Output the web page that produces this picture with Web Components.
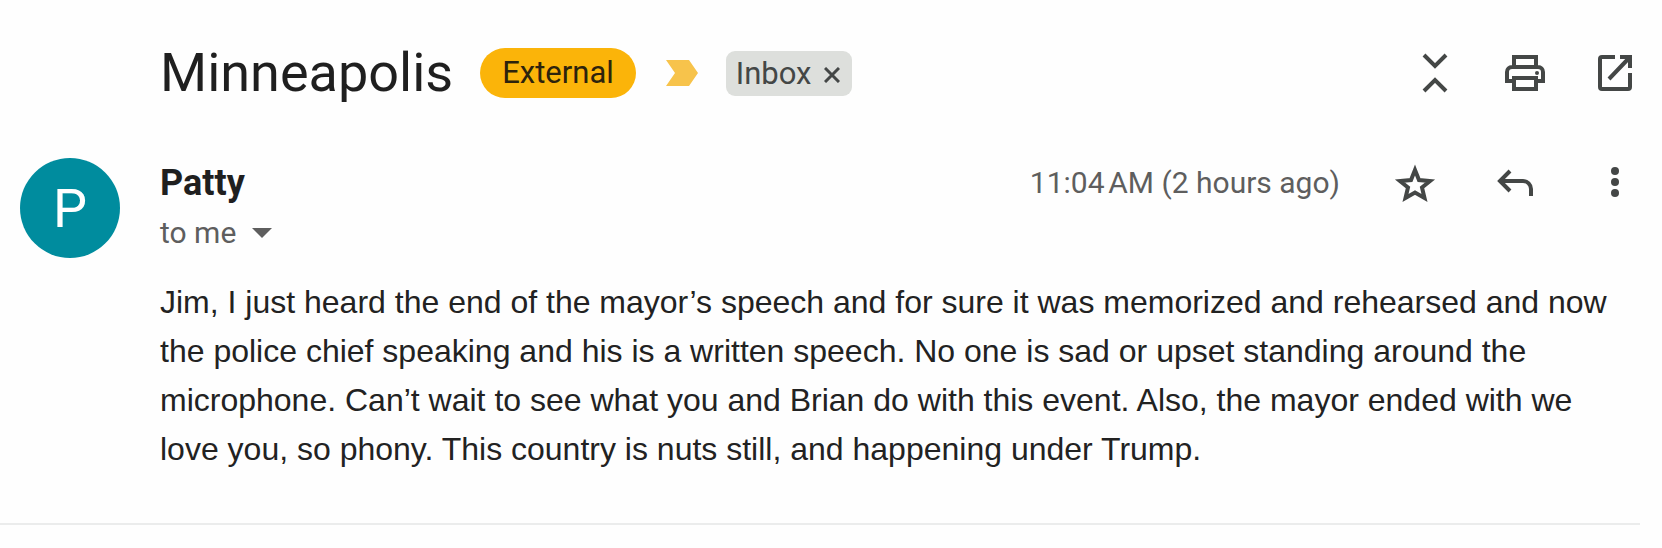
<!DOCTYPE html>
<html lang="en">
<head>
<meta charset="utf-8">
<title>Minneapolis</title>
<style>
body { margin: 0; background: #fefefe; color: #1f1f1f; font-family: Roboto, sans-serif; }
</style>
</head>
<body>
<mail-thread>
  <mail-subject slot="subject">
    Minneapolis
    <mail-badge slot="labels">External</mail-badge>
    <importance-marker slot="labels"></importance-marker>
    <mail-label slot="labels">Inbox</mail-label>
    <icon-button slot="actions" name="collapse" label="Collapse all"></icon-button>
    <icon-button slot="actions" name="print" label="Print all"></icon-button>
    <icon-button slot="actions" name="open" label="In new window"></icon-button>
  </mail-subject>
  <mail-message>
    <mail-avatar slot="avatar">P</mail-avatar>
    <span slot="sender">Patty</span>
    <span slot="recipient">to me</span>
    <span slot="time">11:04&#8239;AM (2 hours ago)</span>
    <icon-button slot="actions" name="star" label="Star"></icon-button>
    <icon-button slot="actions" name="reply" label="Reply"></icon-button>
    <icon-button slot="actions" name="more" label="More"></icon-button>
    Jim, I just heard the end of the mayor’s speech and for sure it was memorized and rehearsed and now the police chief speaking and his is a written speech. No one is sad or upset standing around the microphone. Can’t wait to see what you and Brian do with this event. Also, the mayor ended with we love you, so phony. This country is nuts still, and happening under Trump.
  </mail-message>
</mail-thread>

<script>
const define = (name, html) => customElements.define(name, class extends HTMLElement {
  constructor() {
    super();
    this.attachShadow({ mode: 'open' }).innerHTML = html;
  }
});

const icons = {
  collapse: '<path d="M14 7l11 11L36 7M14 43l11-11 11 11"/>',
  print: '<path d="M14 19V9h22v10M14 33H7V24a5 5 0 0 1 5-5h26a5 5 0 0 1 5 5v9h-7M14 30h22v11H14z"/><circle class="fill" cx="37" cy="25" r="2"/>',
  open: '<path d="M25 9H12a2 2 0 0 0-2 2v28a2 2 0 0 0 2 2h26a2 2 0 0 0 2-2V25M30 9h10v11M40 9L19 31"/>',
  star: '<path stroke-miterlimit="8" d="M25 12L29 22 40 23 32 29.500 34.500 40 25 34.500 15.500 40 18 29.500 10 23 21 22z"/>',
  reply: '<path d="M20 13L10 23l10 10M10 23h23a8 8 0 0 1 8 8v7"/>',
  more: '<g class="fill"><circle cx="25" cy="13" r="4"/><circle cx="25" cy="24" r="4"/><circle cx="25" cy="35" r="4"/></g>'
};

customElements.define('icon-button', class extends HTMLElement {
  connectedCallback() {
    if (this.shadowRoot) return;
    this.attachShadow({ mode: 'open' }).innerHTML = `
      <style>
        :host { display: block; }
        button { display: block; width: 50px; height: 50px; padding: 0; border: 0; background: none; color: #444746; cursor: pointer; }
        svg { display: block; fill: none; stroke: currentColor; stroke-width: 4; }
        .fill { fill: currentColor; stroke: none; }
      </style>
      <button type="button" aria-label="${this.getAttribute('label')}"><svg width="50" height="50" viewBox="0 0 50 50" aria-hidden="true">${icons[this.getAttribute('name')]}</svg></button>`;
  }
});

define('mail-thread', `
  <style>
    :host { display: block; padding: 48px 22px 0 0; }
    main { border-bottom: 2px solid #ebecec; padding-bottom: 49px; }
  </style>
  <main><slot name="subject"></slot><slot></slot></main>`);

define('mail-subject', `
  <style>
    :host { display: block; padding-left: 160px; }
    header, .labels, .actions { display: flex; align-items: center; }
    header { height: 50px; }
    h1 { margin: 0 27px 0 0; font-size: 54px; line-height: 50px; font-weight: 400; white-space: nowrap; }
    .actions { margin-left: auto; gap: 40px; }
  </style>
  <header>
    <h1><slot></slot></h1>
    <div class="labels"><slot name="labels"></slot></div>
    <div class="actions"><slot name="actions"></slot></div>
  </header>`);

define('mail-badge', `
  <style>
    :host { display: block; padding: 0 22px; border-radius: 25px; background: #fbb409; color: #2d230c; font-size: 31px; line-height: 50px; }
  </style><slot></slot>`);

define('importance-marker', `
  <style>
    :host { display: block; margin: 0 28px 0 30px; }
    button { display: block; padding: 0; border: 0; background: none; }
    svg { display: block; }
  </style>
  <button type="button" aria-label="Important"><svg width="32" height="26" viewBox="0 0 32 26" aria-hidden="true"><path fill="#f7c34b" d="M0 0h23l9 13-9 13H0l9-13z"/></svg></button>`);

define('mail-label', `
  <style>
    :host { display: flex; align-items: center; gap: 12px; height: 45px; padding: 0 12px 0 10px; border-radius: 9px; background: #dddfdc; color: #444746; font-size: 31px; line-height: 45px; }
    button { padding: 4px 0 0; border: 0; background: none; color: inherit; }
    svg { display: block; }
  </style>
  <slot></slot>
  <button type="button" aria-label="Remove label"><svg width="16" height="16" viewBox="0 0 16 16" aria-hidden="true"><path fill="none" stroke="currentColor" stroke-width="3" d="M1 1l14 14M15 1L1 15"/></svg></button>`);

define('mail-avatar', `
  <style>
    :host { display: block; width: 100px; height: 100px; border-radius: 50%; background: #008c9e; color: #fff; font-size: 54px; line-height: 102px; text-align: center; }
  </style><slot></slot>`);

define('mail-message', `
  <style>
    :host { display: block; margin-top: 60px; }
    article { display: grid; grid-template-columns: 100px 1fr; column-gap: 40px; padding-left: 20px; }
    .top, .actions { display: flex; align-items: center; }
    .top { height: 50px; }
    h2 { margin: 0; font-size: 36px; line-height: 50px; font-weight: 700; }
    .time { margin-left: auto; color: #5e5e5e; font-size: 30px; line-height: 50px; white-space: nowrap; }
    .actions { margin-left: 50px; gap: 50px; }
    .to { display: flex; align-items: center; gap: 16px; height: 50px; padding: 0; border: 0; background: none; color: #5e5e5e; font: 30px/50px Roboto, sans-serif; }
    svg { display: block; }
    p { grid-column: 2; margin: 20px 0 0; padding-right: 10px; font-family: "Liberation Sans", Arial, sans-serif; font-size: 32px; line-height: 49px; color: #222; }
  </style>
  <article>
    <slot name="avatar"></slot>
    <div>
      <div class="top">
        <h2><slot name="sender"></slot></h2>
        <div class="time"><slot name="time"></slot></div>
        <div class="actions"><slot name="actions"></slot></div>
      </div>
      <button class="to" type="button"><slot name="recipient"></slot><svg width="20" height="10" viewBox="0 0 20 10" aria-hidden="true"><path fill="currentColor" d="M0 0h20L10 10z"/></svg></button>
    </div>
    <p><slot></slot></p>
  </article>`);
</script>
</body>
</html>
